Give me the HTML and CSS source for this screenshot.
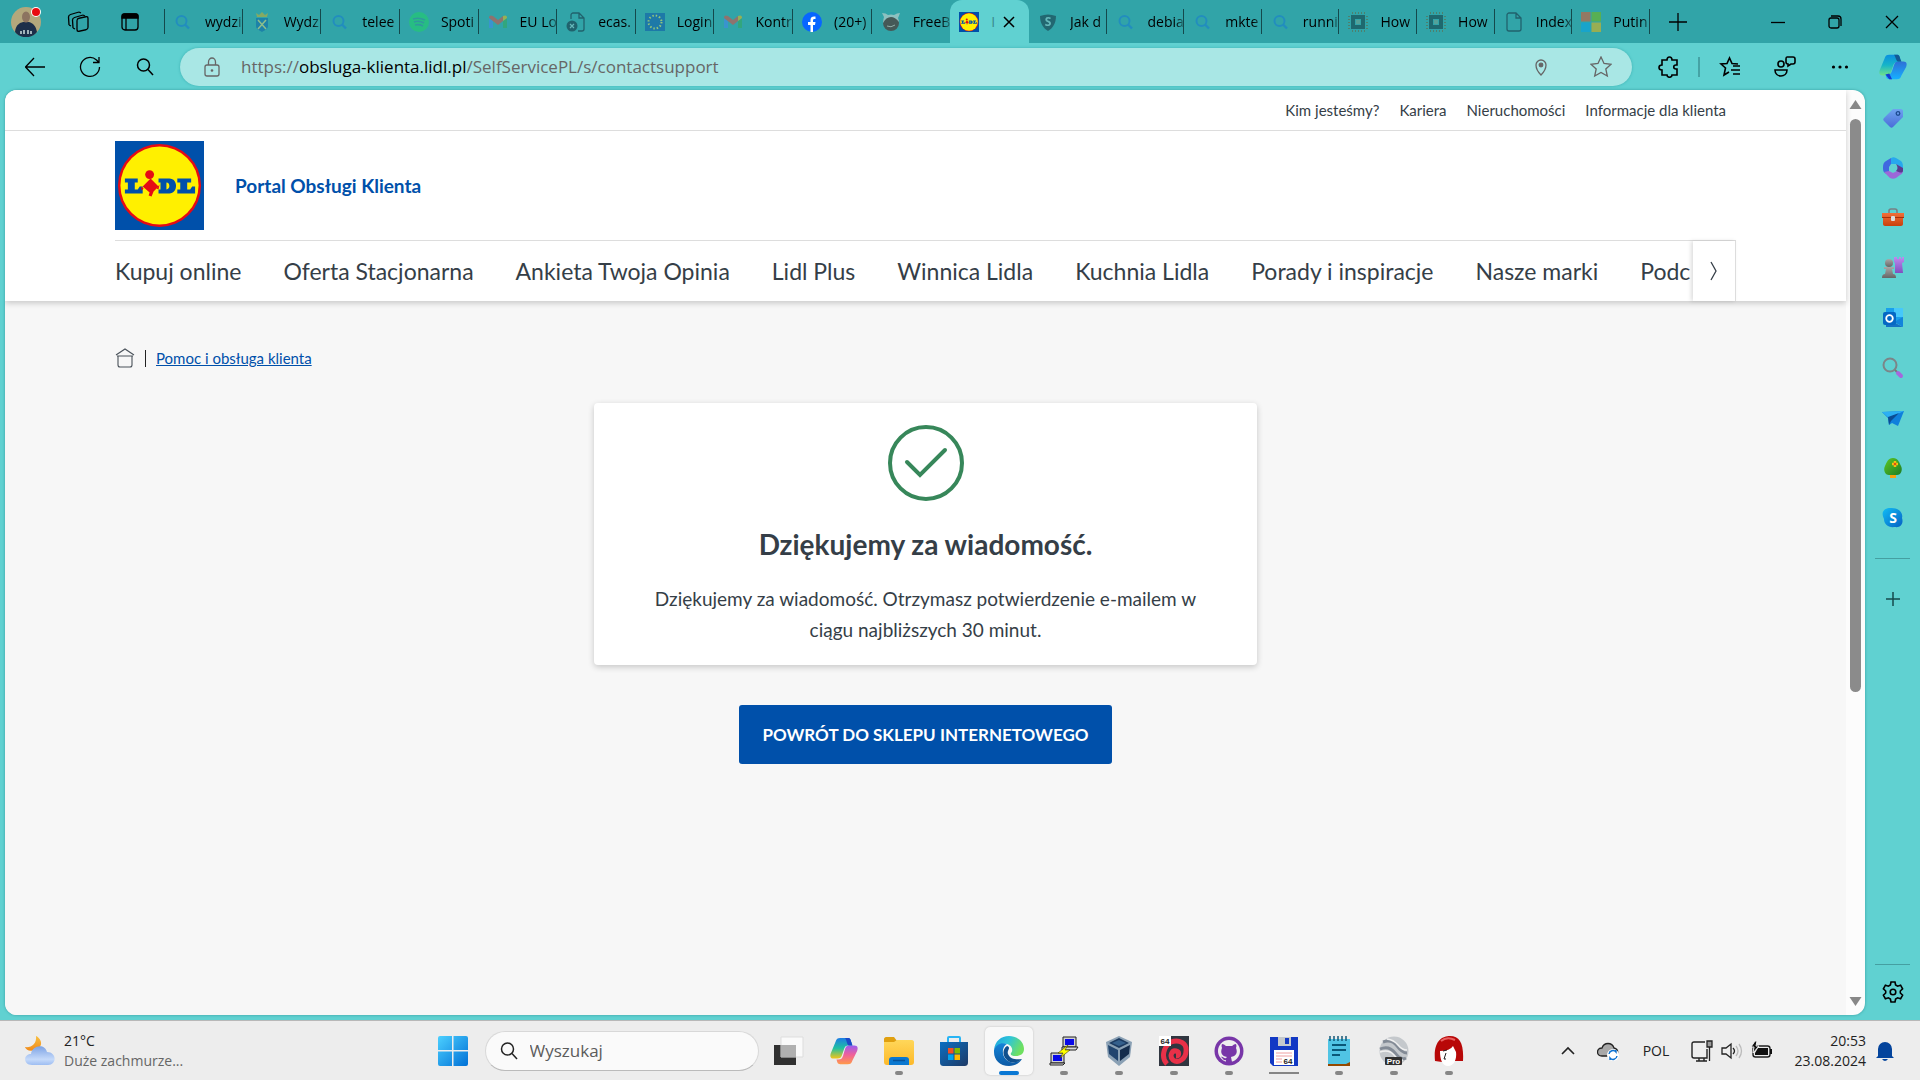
FILE: index.html
```
<!DOCTYPE html>
<html lang="pl">
<head>
<meta charset="utf-8">
<title>Portal Obsługi Klienta</title>
<link rel="stylesheet" href="styles.css">
</head>
<body>
<svg class="defs" aria-hidden="true">
  <defs>
    <linearGradient id="gCop1" x1="0" y1="0" x2="0" y2="1"><stop offset="0" stop-color="#0a8fe0"/><stop offset=".5" stop-color="#16b5c8"/><stop offset="1" stop-color="#6fe08a"/></linearGradient>
    <linearGradient id="gCop2" x1="0" y1="0" x2="0" y2="1"><stop offset="0" stop-color="#2e6fd6"/><stop offset="1" stop-color="#16b0ff"/></linearGradient>
    <linearGradient id="gPil1" x1="0" y1="0" x2="0" y2="1"><stop offset="0" stop-color="#1c7be6"/><stop offset=".5" stop-color="#1fc0a0"/><stop offset="1" stop-color="#f5c518"/></linearGradient>
    <linearGradient id="gPil2" x1="0" y1="0" x2="0" y2="1"><stop offset="0" stop-color="#9a5cf0"/><stop offset=".5" stop-color="#f0609a"/><stop offset="1" stop-color="#ff9a4a"/></linearGradient>
    <linearGradient id="gWin" x1="0" y1="0" x2="1" y2="1"><stop offset="0" stop-color="#4cd0ff"/><stop offset="1" stop-color="#0070d6"/></linearGradient>
    <linearGradient id="gFold" x1="0" y1="0" x2="0" y2="1"><stop offset="0" stop-color="#ffd75a"/><stop offset="1" stop-color="#fdb92a"/></linearGradient>
    <linearGradient id="gStore" x1="0" y1="0" x2="1" y2="1"><stop offset="0" stop-color="#0a6fc2"/><stop offset="1" stop-color="#1f3a66"/></linearGradient>
    <linearGradient id="gEdge" x1="0" y1="0" x2="1" y2=".4"><stop offset="0" stop-color="#1ba0e0"/><stop offset=".5" stop-color="#2fc5d8"/><stop offset="1" stop-color="#6fe060"/></linearGradient>
    <linearGradient id="gEdge2" x1="0" y1="0" x2="0" y2="1"><stop offset="0" stop-color="#1484d8"/><stop offset="1" stop-color="#0c59a4"/></linearGradient>
    <linearGradient id="gTag" x1="0" y1="0" x2="0" y2="1"><stop offset="0" stop-color="#6ea4f0"/><stop offset="1" stop-color="#4a6cd8"/></linearGradient>
    <linearGradient id="gBox" x1="0" y1="0" x2="0" y2="1"><stop offset="0" stop-color="#f0703a"/><stop offset="1" stop-color="#c8400c"/></linearGradient>
    <linearGradient id="gPawn" x1="0" y1="0" x2="0" y2="1"><stop offset="0" stop-color="#a8a8a8"/><stop offset="1" stop-color="#666"/></linearGradient>
    <linearGradient id="gRook" x1="0" y1="0" x2="0" y2="1"><stop offset="0" stop-color="#c08af0"/><stop offset="1" stop-color="#8050c0"/></linearGradient>
    <linearGradient id="gSky" x1="0" y1="0" x2="1" y2="1"><stop offset="0" stop-color="#10bdf5"/><stop offset="1" stop-color="#0660c4"/></linearGradient>
    <linearGradient id="gCloud" x1="0" y1="0" x2="0" y2="1"><stop offset="0" stop-color="#7ca2e4"/><stop offset=".7" stop-color="#c5dafa"/><stop offset="1" stop-color="#9dbdf2"/></linearGradient>
    <linearGradient id="gMoon" x1="0" y1="0" x2="0" y2="1"><stop offset="0" stop-color="#f8c040"/><stop offset="1" stop-color="#f08a1c"/></linearGradient>
    <linearGradient id="gTree" x1="0" y1="0" x2="1" y2="1"><stop offset="0" stop-color="#5cc824"/><stop offset="1" stop-color="#1e7c24"/></linearGradient>
    <symbol id="search" viewBox="0 0 20 20"><circle cx="8.500" cy="8" r="6" fill="none" stroke="currentColor" stroke-width="1.500"/><path d="M13 12.500 18 18" fill="none" stroke="currentColor" stroke-width="1.500"/></symbol>
    <symbol id="bing" viewBox="0 0 20 20"><circle cx="8.500" cy="9" r="5" fill="none" stroke="#1478d4" stroke-width="2"/><path d="m12 12.500 4 4" stroke="#1478d4" stroke-width="2.400"/></symbol>
    <symbol id="gmail" viewBox="0 0 20 20"><path d="M1 6v10h4V9z" fill="#4285f4"/><path d="M19 6v10h-4V9z" fill="#34a853"/><path d="M1 6c0-3 2-3 4-2l5 4 5-4v5l-5 4-9-7z" fill="#ea4335"/><path d="M15 4c2-1 4-1 4 2l-4 3z" fill="#fbbc04"/></symbol>
    <symbol id="chip" viewBox="0 0 20 20"><path d="M4 1h13M4 19h13" stroke="#6b5e34" stroke-width="2" stroke-dasharray="1 2"/><path d="M1 4v13M19 4v13" stroke="#6b5e34" stroke-width="2" stroke-dasharray="1 2"/><path d="M3 3h14v14H3zM7 7v6h6V7z" fill="#0c3038" fill-rule="evenodd"/><path d="M8 8h4v4H8z" fill="#7aa08a"/></symbol>
    <symbol id="lidl" viewBox="0 0 90 90"><path d="M0 0h90v90H0z" fill="#0050aa"/><circle cx="45" cy="45" r="42" fill="#e60a14"/><circle cx="45" cy="45" r="39.500" fill="#fff000"/><path d="M10 38h13v4h-3v7h3l2-3h3v7H10v-4h3v-7h-3zM44 38h11c9 0 9 15 0 15H44v-4h2v-7h-2zM52 42v7c4 0 4-7 0-7zM63 38h14v4h-4v7h3l2-3h3v7H63v-4h3v-7h-3z" fill="#0050aa"/><path d="m36 38 8 8-5 5-2 5-3-1 1-3-7-6z" fill="#e60a14"/><path d="m26 46 3 2-2 2zM45 44l-3 4 2 1z" fill="#e60a14"/><circle cx="35" cy="34" r="4.500" fill="#e60a14"/></symbol>
    <symbol id="copilot" viewBox="0 0 32 32"><path d="M12 3h8c3 0 3 2 4 5l1 3h-4c-3 0-4 1-5 4l-2 6c-1 3-2 4-5 4H5c-4 0-4-3-3-6L7 7c1-3 2-4 5-4z" fill="url(#gCop1)"/><path d="M20 29h-8c-3 0-3-2-4-5h2c3 0 4-1 5-4l2-6c1-3 2-4 5-4h5c4 0 4 3 3 6l-5 9c-1 3-2 4-5 4z" fill="url(#gCop2)"/><path d="M17 3h3c3 0 3 2 4 5l1 2h-4c-2-1-2-5-4-7z" fill="#135a94"/><path d="m8 24 4 5h3l-3-6z" fill="#153bd0"/></symbol>
    <symbol id="pilot" viewBox="0 0 32 32"><path d="M12 2h8c3 0 3 2 4 5l1 3h-4c-3 0-4 1-5 4l-2 6c-1 3-2 4-5 4H5c-4 0-4-3-3-6L7 6c1-3 2-4 5-4z" fill="url(#gPil1)"/><path d="M20 30h-8c-3 0-3-2-4-5h2c3 0 4-1 5-4l2-7c1-3 2-4 5-4h5c4 0 4 3 3 6l-5 10c-1 3-2 4-5 4z" fill="url(#gPil2)"/><path d="M17 2h3c3 0 3 2 4 5l1 3h-4c-2-1-2-6-4-8z" fill="#1b49c8"/></symbol>
  </defs>
</svg>

<header class="browser">
  <div class="tabstrip">
    <button class="cell cell-tool" aria-label="Profil"><svg class="i30" viewBox="0 0 30 30"><circle cx="15" cy="15" r="15" fill="#b3a87c"/><path d="M4 25c1-8 5-9 8-10h6c4 1 7 4 8 10-5 7-17 7-22 0z" fill="#1c2f4a"/><ellipse cx="15" cy="10" rx="4" ry="5.500" fill="#8c7460"/><path d="M10 24v3M13 23v4M17 23v4M20 24v3" stroke="#cdd" stroke-width="1.500"/><circle cx="25" cy="5" r="5" fill="#fff"/><circle cx="25" cy="5" r="4" fill="#e80c10"/></svg></button>
    <button class="cell cell-tool" aria-label="Obszary robocze"><svg class="i24 line" viewBox="0 0 24 24"><rect x="11" y="7" width="11" height="13" rx="2" transform="skewY(-12) translate(0 4)"/><path d="M7 18l-.5-8c0-1 .5-2 2-2.500L17 5M3 15l-.5-8c0-1 .5-2 2-2.500L13 2M7 18l2 1M3 15l2 1M13 2l2 1M17 5l2 1"/></svg></button>
    <button class="cell cell-tool" aria-label="Karty"><svg class="i24 line" viewBox="0 0 24 24"><rect x="4" y="4" width="16" height="16" rx="3"/><path d="M8 8v12"/><path d="M4 8V6c0-1 1-2 2-2h12c1 0 2 1 2 2v2z" fill="#000"/></svg></button>
    <nav class="tabs" aria-label="Karty przeglądarki">
      <a class="tab first" href="#"><svg class="fav"><use href="#bing"/></svg><span>wydzi</span></a>
      <a class="tab" href="#"><svg class="fav" viewBox="0 0 20 20"><path d="m5 5-1-4 3 2 3-3 3 3 3-2-1 4z" fill="#d8b020"/><path d="M4 6h12v8c0 3-3 4-6 6-3-2-6-3-6-6z" fill="#0a62a8"/><path d="m6 8 8 9M14 8l-8 9" stroke="#e8d870" stroke-width="1.500"/></svg><span>Wydz</span></a>
      <a class="tab" href="#"><svg class="fav"><use href="#bing"/></svg><span>telee</span></a>
      <a class="tab" href="#"><svg class="fav" viewBox="0 0 20 20"><circle cx="10" cy="10" r="10" fill="#1ed760"/><path d="M4 7q6-2 12 1M5 10q5-2 10 1M6 13q4-1 8 1" fill="none" stroke="#2f8f94" stroke-width="1.600"/></svg><span>Spoti</span></a>
      <a class="tab" href="#"><svg class="fav"><use href="#gmail"/></svg><span>EU Lo</span></a>
      <a class="tab" href="#"><svg class="fav" viewBox="0 0 20 20"><path d="M5 7V3c0-1 1-2 2-2h6l5 5v11c0 1-1 2-2 2h-4M13 1v5h5" fill="none" stroke="#123" stroke-width="1.300"/><circle cx="6" cy="14" r="5.500" fill="#123"/><path d="m4 12 4 4m0-4-4 4" stroke="#9cc" stroke-width="1.200"/></svg><span>ecas.</span></a>
      <a class="tab" href="#"><svg class="fav" viewBox="0 0 20 20"><path d="M0 1h20v18H0z" fill="#0a50a8"/><circle cx="10" cy="10" r="6.500" fill="none" stroke="#f5e850" stroke-width="2" stroke-dasharray="1.400 2"/></svg><span>Login</span></a>
      <a class="tab" href="#"><svg class="fav"><use href="#gmail"/></svg><span>Kontr</span></a>
      <a class="tab" href="#"><svg class="fav awake" viewBox="0 0 20 20"><circle cx="10" cy="10" r="10" fill="#0866ff"/><path d="M8.500 20v-7H6v-3h2.500V8c0-3 2-4 5-3.500v2.500c-2 0-2.500 0-2.500 1.500V10h2.500l-.5 3h-2v7z" fill="#fff"/></svg><span>(20+)</span></a>
      <a class="tab" href="#"><svg class="fav" viewBox="0 0 20 20"><circle cx="10" cy="11" r="8" fill="#5a1008"/><path d="M1 1q4 0 6 2 3-1 6 0 3-2 6-2-1 3-2 5 1 2 1 4-4-5-8-5-5 0-8 6 0-3 1-6-1-2-2-4z" fill="#e8ded8"/><path d="M6 14q4 2 8-1" stroke="#eba" fill="none"/></svg><span>FreeB</span></a>
      <a class="tab active" href="#" aria-current="page"><svg class="fav awake"><use href="#lidl"/></svg><span>I</span><svg class="close" viewBox="0 0 12 12"><path d="m1 1 10 10m0-10L1 11" stroke="#000" stroke-width="1.500"/></svg></a>
      <a class="tab" href="#"><svg class="fav" viewBox="0 0 20 20"><path d="M2 4q8-3 16 0c0 7-3 12-8 15C5 16 2 11 2 4z" fill="#152c3c"/><text x="10" y="14" class="ico-s">S</text></svg><span>Jak d</span></a>
      <a class="tab" href="#"><svg class="fav"><use href="#bing"/></svg><span>debia</span></a>
      <a class="tab" href="#"><svg class="fav"><use href="#bing"/></svg><span>mkte</span></a>
      <a class="tab" href="#"><svg class="fav"><use href="#bing"/></svg><span>runni</span></a>
      <a class="tab" href="#"><svg class="fav"><use href="#chip"/></svg><span>How</span></a>
      <a class="tab" href="#"><svg class="fav"><use href="#chip"/></svg><span>How</span></a>
      <a class="tab" href="#"><svg class="fav" viewBox="0 0 20 20"><path d="M3 3c0-1 1-2 2-2h7l5 5v11c0 1-1 2-2 2H5c-1 0-2-1-2-2zM12 1v5h5" fill="none" stroke="#123" stroke-width="1.300"/></svg><span>Index</span></a>
      <a class="tab" href="#"><svg class="fav" viewBox="0 0 20 20"><path d="M0 0h9.500v9.500H0z" fill="#f25022"/><path d="M10.500 0H20v9.500h-9.500z" fill="#7fba00"/><path d="M0 10.500h9.500V20H0z" fill="#00a4ef"/><path d="M10.500 10.500H20V20h-9.500z" fill="#ffb900"/></svg><span>Putin</span></a>
    </nav>
    <button class="cell" aria-label="Nowa karta"><svg class="i18 line" viewBox="0 0 18 18"><path d="M9 0v18M0 9h18"/></svg></button>
    <div class="window-controls">
      <button aria-label="Minimalizuj"><svg class="i14 line" viewBox="0 0 14 14"><path d="M0 7.500h14"/></svg></button>
      <button aria-label="Przywróć"><svg class="i14 line" viewBox="0 0 14 14"><rect x="1" y="3" width="10" height="10" rx="2"/><path d="M3 1h7c2 0 3 1 3 3v7"/></svg></button>
      <button aria-label="Zamknij"><svg class="i14 line" viewBox="0 0 14 14"><path d="m1 1 12 12m0-12L1 13"/></svg></button>
    </div>
  </div>
  <div class="toolbar">
    <button class="cell" aria-label="Wstecz"><svg class="i20 line" viewBox="0 0 20 20"><path d="M20 10H1m8-9-8.500 9L9 19"/></svg></button>
    <button class="cell" aria-label="Odśwież"><svg class="i22 line" viewBox="0 0 22 22"><path d="M20.500 11a9.500 9.500 0 1 1-3-7l2 2M20 1v5.500h-6"/></svg></button>
    <button class="cell" aria-label="Szukaj"><svg class="i20"><use href="#search"/></svg></button>
    <div class="address">
      <svg class="i20 soft" viewBox="0 0 20 20"><rect x="3" y="8" width="14" height="11" rx="2"/><path d="M6.500 8V5a3.500 4 0 0 1 7 0v3"/><circle cx="10" cy="13.500" r=".7"/></svg>
      <div class="url" role="textbox" contenteditable="true" spellcheck="false" aria-label="Pasek adresu">https://<b>obsluga-klienta.lidl.pl</b>/SelfServicePL/s/contactsupport</div>
      <button aria-label="Lokalizacja"><svg class="i18 soft" viewBox="0 0 18 18"><path d="M9 17C5 13 4 10 4 7a5 5 0 0 1 10 0c0 3-1 6-5 10z"/><circle cx="9" cy="7" r="1.800" fill="#666"/></svg></button>
      <button aria-label="Ulubione"><svg class="i22 soft" viewBox="0 0 22 22"><path d="m11 1 3 6.500 7 .8-5.200 4.700 1.500 7L11 16.500 4.700 20l1.500-7L1 8.300l7-.8z"/></svg></button>
    </div>
    <button class="cell" aria-label="Rozszerzenia"><svg class="i22 line bold" viewBox="0 0 22 22"><path d="M7 4h2c0-4 5-4 5 0h5v5h-1c-3 0-3 4 0 4h1v6h-5c0 3-5 3-5 0H4v-5C0 14 0 9 4 9V4z"/></svg></button>
    <span class="bar"></span>
    <button class="cell" aria-label="Lista ulubionych"><svg class="i22 line bold" viewBox="0 0 22 22"><path d="m19 8-6-.5L10.500 2 8 7.500 2 8l4.500 4L5 19l5-3M14 10h7M12 14h9M14 18h7"/></svg></button>
    <button class="cell" aria-label="Opinie"><svg class="i24 line bold" viewBox="0 0 24 24"><circle cx="8" cy="9" r="3"/><path d="M2 15h12c0 8-12 8-12 0zM14 2h6c1 0 2 1 2 2v3c0 1-1 2-2 2h-2l-3 2V9c-1 0-2-1-2-2V4c0-1 0-2 1-2z"/></svg></button>
    <button class="cell" aria-label="Więcej"><svg class="i18" viewBox="0 0 18 18"><circle cx="2.500" cy="9" r="1.600"/><circle cx="9" cy="9" r="1.600"/><circle cx="15.500" cy="9" r="1.600"/></svg></button>
    <button class="cell cell-tool" aria-label="Copilot"><svg class="i30"><use href="#copilot"/></svg></button>
  </div>
</header>

<div class="workspace">
  <div class="viewport">
    <div class="page">
      <header class="site-header">
        <nav class="meta"><a href="#">Kim jesteśmy?</a><a href="#">Kariera</a><a href="#">Nieruchomości</a><a href="#">Informacje dla klienta</a></nav>
        <div class="brand"><a href="#" aria-label="Lidl"><svg class="logo"><use href="#lidl"/></svg></a><a class="portal" href="#">Portal Obsługi Klienta</a></div>
        <div class="menu">
          <nav class="menu-links"><a href="#">Kupuj online</a><a href="#">Oferta Stacjonarna</a><a href="#">Ankieta Twoja Opinia</a><a href="#">Lidl Plus</a><a href="#">Winnica Lidla</a><a href="#">Kuchnia Lidla</a><a href="#">Porady i inspiracje</a><a href="#">Nasze marki</a><a href="#">Podc</a></nav>
          <button class="menu-next" aria-label="Dalej"><svg class="i20" viewBox="0 0 20 20"><path d="m7 1 5 9-5 9" fill="none" stroke="#353e47" stroke-width="1.300"/></svg></button>
        </div>
      </header>
      <main class="content">
        <nav class="crumbs"><a href="#" aria-label="Strona główna"><svg class="i20" viewBox="0 0 20 20"><path d="m1 7 9-6 9 6M3 8v9c0 1 1 2 2 2h10c1 0 2-1 2-2V8zM2 8h16" fill="none" stroke="#4a525a" stroke-width="1.100"/></svg></a><span class="crumb-bar"></span><a class="crumb" href="#">Pomoc i obsługa klienta</a></nav>
        <section class="card">
          <svg class="check" viewBox="0 0 76 76"><circle cx="38" cy="38" r="36"/><path d="m19 37 13 13 25-25" stroke-linecap="round"/></svg>
          <h1>Dziękujemy za wiadomość.</h1>
          <p>Dziękujemy za wiadomość. Otrzymasz potwierdzenie e-mailem w ciągu najbliższych 30 minut.</p>
        </section>
        <button class="cta">POWRÓT DO SKLEPU INTERNETOWEGO</button>
      </main>
    </div>
    <div class="scrollbar"><svg class="arrow" viewBox="0 0 12 10"><path d="M6 0 12 9H0z"/></svg><div class="track"><div class="thumb"></div></div><svg class="arrow" viewBox="0 0 12 10"><path d="M6 10 12 1H0z"/></svg></div>
  </div>
  <aside class="sidebar">
    <button aria-label="Zakupy"><svg class="i22" viewBox="0 0 22 22"><path d="M11 2h8c1 0 2 1 2 2v6L11 20c-1 1-2 1-3 0l-6-6c-1-1-1-2 0-3z" fill="url(#gTag)"/><circle cx="16" cy="6.500" r="1.800" fill="none" stroke="#1c4a90" stroke-width="1.300"/></svg></button>
    <button aria-label="Microsoft 365"><svg class="i22" viewBox="0 0 22 22"><path d="M9 1v6l-2 3v8L3 16c-2-1-2-3-2-6s1-5 3-6z" fill="#3f68e0"/><path d="M9 1c2-1 3-1 5 0l5 3c2 2 2 4 2 8l-7-5H9z" fill="#27a8ee"/><path d="M2 15l5-1 4 2 8-4 2 1c0 3-1 4-3 5l-4 3c-2 1-4 1-6 0z" fill="#9c68d8"/><path d="M14 7l7 4v3c-1 3-4 1-7 0 2-2 2-4 0-7z" fill="#5a3a90"/></svg></button>
    <button aria-label="Narzędzia"><svg class="i22" viewBox="0 0 22 22"><path d="M7 7V4c0-1 1-2 2-2h4c1 0 2 1 2 2v3" fill="none" stroke="#778084" stroke-width="1.600"/><path d="M0 6h22v5h-1v6c0 1-1 2-2 2H3c-1 0-2-1-2-2v-6H0z" fill="url(#gBox)"/><path d="M0 10h22v1H0z" fill="#a83008"/><rect x="9" y="9" width="4" height="5" rx="1" fill="#ddd"/></svg></button>
    <button aria-label="Gry"><svg class="i22" viewBox="0 0 22 22"><path d="M12 0h3v2h2V0h2v2h1V0h2v5l-2 1 1 10h-8V6l-1-1z" fill="url(#gRook)"/><circle cx="7" cy="6" r="4" fill="url(#gPawn)"/><path d="M2 10h10v2h-2l1 5c2 0 3 1 3 4H0c0-3 1-4 3-4l1-5H2z" fill="url(#gPawn)"/></svg></button>
    <button aria-label="Outlook"><svg class="i22" viewBox="0 0 22 22"><path d="M4 1h17v13H4z" fill="#18a0ec"/><path d="M12 1h9v9h-9z" fill="#46c8fa"/><path d="M4 11 21 20H4z" fill="#1370c4"/><path d="m21 10-9 5 9 5z" fill="#1284dc"/><rect x="1" y="5" width="13" height="13" rx="2" fill="#0568c4"/><circle cx="7.500" cy="11.500" r="3.300" fill="none" stroke="#fff" stroke-width="1.800"/></svg></button>
    <button aria-label="Wyszukaj"><svg class="i22" viewBox="0 0 22 22"><circle cx="8" cy="8" r="6.500" fill="none" stroke="#7c8588" stroke-width="2"/><path d="m13 13 3 3" stroke="#777" stroke-width="2"/><path d="m16 16 3 3" stroke="#a468dc" stroke-width="4" stroke-linecap="round"/></svg></button>
    <button aria-label="Drop"><svg class="i22" viewBox="0 0 22 22"><path d="m0 5 22-1-6 15-6-3-3 2-1-7z" fill="#0f80dc"/><path d="m0 5 22-1L7 11z" fill="#2cb0f4"/><path d="m6 10 11-4-8 8-2 4z" fill="#0b4d94"/></svg></button>
    <button aria-label="Drzewo"><svg class="i22" viewBox="0 0 22 22"><path d="M8 16h6v5H8z" fill="#f5a210"/><path d="M11 1c5 0 6 4 8 8s0 9-4 9H7c-4 0-6-5-4-9s3-8 8-8z" fill="url(#gTree)"/><path d="M13 4v6M10 7h6" stroke="#f8c010" stroke-width="2.500"/><circle cx="13" cy="7" r="1.300" fill="#e05010"/></svg></button>
    <button aria-label="Skype"><svg class="i22" viewBox="0 0 22 22"><path d="M7 1c4 0 6 0 8 1 4 2 6 5 5 9 2 6-2 10-7 9C6 21 2 17 2 12-1 6 1 2 7 1z" fill="url(#gSky)"/><text x="11" y="16" class="ico-s ico-l">S</text></svg></button>
    <span class="rule"></span>
    <button class="add" aria-label="Dodaj"><svg class="i14" viewBox="0 0 14 14"><path d="M7 0v14M0 7h14" stroke="#164a4c" stroke-width="1.500"/></svg></button>
    <span class="rule bottom"></span>
    <button aria-label="Ustawienia"><svg class="i22 line bold" viewBox="0 0 22 22"><path d="M9 1h4l.6 3 2 1.200 3-1 2 3.600L18.300 10v2l2.300 2.200-2 3.600-3-1-2 1.200-.6 3H9l-.6-3-2-1.200-3 1-2-3.600L3.700 12v-2L1.400 7.800l2-3.600 3 1 2-1.200z"/><circle cx="11" cy="11" r="2.800"/></svg></button>
  </aside>
</div>

<footer class="taskbar">
  <button class="weather"><svg class="i30" viewBox="0 0 30 30"><path d="M11 0c6 3 8 11-1 14-5 2-9 0-10-3 6 1 12-3 11-11z" fill="url(#gMoon)"/><path d="M7 29c-9 0-9-11-1-11 1-9 14-11 16-2 10 0 10 13 1 13z" fill="url(#gCloud)"/></svg><span class="two"><span>21°C</span><span class="muted">Duże zachmurze...</span></span></button>
  <div class="tasks">
    <button class="start" aria-label="Start"><svg class="i30" viewBox="0 0 30 30"><path d="M0 2q0-2 2-2h12v14H0zM15.500 0H28q2 0 2 2v12H15.500zM0 15.500h14V30H2q-2 0-2-2zM15.500 15.500H30V28q0 2-2 2H15.500z" fill="url(#gWin)"/></svg></button>
    <label class="search"><svg class="i20"><use href="#search"/></svg><input type="search" placeholder="Wyszukaj" aria-label="Wyszukaj"></label>
    <div class="apps">
      <button aria-label="Widok zadań"><svg class="i30" viewBox="0 0 30 30"><path d="M0 9h22v20H0z" fill="#303030"/><path d="M7 1h22v20H7z" fill="#fafafa" stroke="#ddd"/><path d="M7 9h15v12H7z" fill="#b0b0b0"/></svg></button>
      <button aria-label="Copilot"><svg class="i30"><use href="#pilot"/></svg></button>
      <button class="run" aria-label="Eksplorator plików"><svg class="i30" viewBox="0 0 30 30"><path d="M0 3c0-1 1-2 2-2h8l3 4h13v5H0z" fill="#e0a010"/><path d="M0 6h10l3-2h15c1 0 2 1 2 2v20c0 2-1 3-3 3H3c-2 0-3-1-3-3z" fill="url(#gFold)"/><path d="M5 29v-5c0-2 1-3 3-3h14c2 0 3 1 3 3v5z" fill="#0b78d0"/><path d="M9 24.500h12" stroke="#07529a" stroke-width="1.500"/></svg></button>
      <button aria-label="Microsoft Store"><svg class="i30" viewBox="0 0 30 30"><path d="M9 7V2q0-1 1-1h10q1 0 1 1v5" fill="none" stroke="#28b4f4" stroke-width="2"/><path d="M1 6h28v20c0 3-1 4-4 4H5c-3 0-4-1-4-4z" fill="url(#gStore)"/><path d="M9 12h5.500v5.500H9z" fill="#f25022"/><path d="M15.500 12H21v5.500h-5.500z" fill="#7fba00"/><path d="M9 18.500h5.500V24H9z" fill="#00a4ef"/><path d="M15.500 18.500H21V24h-5.500z" fill="#ffb900"/></svg></button>
      <button class="run current" aria-label="Microsoft Edge"><svg class="i30" viewBox="0 0 30 30"><path d="M0 14C1 5 7 0 15 0c9 0 15 6 15 13 0 5-4 7-8 7-4 0-6-1-5-3 2-2 2-7-4-9C7 7 2 10 0 14z" fill="url(#gEdge)"/><path d="M0 14C2 8 8 6 13 8c-5 2-7 14 3 18 4 1 8 0 12-3-3 5-8 7-13 7C6 30 0 24 0 16z" fill="url(#gEdge2)"/><path d="M13 10c-6 4-4 13 3 16 4 1 9 0 12-3-6 1-12 0-14-5-1-3 1-4 1-6 0-1-1-2-2-2z" fill="#10508e"/></svg></button>
      <button class="run" aria-label="PuTTY"><svg class="i30" viewBox="0 0 30 30"><path d="M14 1h13v10H14zM2 17h13v10H2z" fill="#d0d0d0" stroke="#222"/><path d="M16 3h9v6h-9zM4 19h9v6H4z" fill="#0808e8"/><path d="M13 11h16l-2 3H13zM1 27h15l-2 2H1z" fill="#d8d8d8" stroke="#222"/><path d="m19 9-10 8h5l-3 5 10-8h-5z" fill="#ff0" stroke="#443c00" stroke-width=".6"/></svg></button>
      <button class="run" aria-label="VirtualBox"><svg class="i30" viewBox="0 0 30 30"><path d="M15 0 28 6 26 21 15 30 4 21 2 6z" fill="#8aa0b4"/><path d="m15 2 10 5-10 5L5 7z" fill="#1c3a60"/><path d="m4 9 10 5v11l-9-7z" fill="#21446e"/><path d="m26 9-10 5v11l9-7z" fill="#142c4c"/><path d="m8 7 7-3 7 3-7 3z" fill="#35608c"/></svg></button>
      <button class="run" aria-label="PSPad"><svg class="i30" viewBox="0 0 30 30"><path d="M0 0h30v30H0z" fill="#303640"/><path d="M8 28C2 22 4 11 12 6c8-3 16 1 15 9 0 8-8 13-13 9-4-4-1-10 3-9 4 1 3 5 0 5" fill="none" stroke="#e83048" stroke-width="5"/><path d="M0 0h12v10H0z" fill="#fff"/><text x="6" y="8" class="ico-64">64</text></svg></button>
      <button class="run" aria-label="GitHub"><svg class="i30" viewBox="0 0 30 30"><circle cx="15" cy="15" r="14.500" fill="#7836a8"/><circle cx="15" cy="15" r="11" fill="#eee"/><path d="M8 8q2 0 4 2h6q2-2 4-2 1 2 0 4c2 5 0 8-5 9l1 5h-6v-2c-3 1-3-2-5-3 2-1 3 2 5 1l1-1c-5-1-7-4-5-9q-1-2 0-4z" fill="#7836a8"/></svg></button>
      <button class="run grouped" aria-label="Total Commander"><svg class="i30" viewBox="0 0 30 30"><path d="M1 1h28v29H4l-3-3z" fill="#1238c4"/><path d="M9 1h13v9H9z" fill="#c4c8cc"/><path d="M16 2h4v6h-4z" fill="#1238c4"/><path d="M5 14h20v15H5z" fill="#fff"/><path d="M7 17h16M7 20h16M7 23h6M7 26h6" stroke="#f0a0a0"/><text x="19" y="28" class="ico-64">64</text></svg></button>
      <button class="run" aria-label="Notatnik"><svg class="i30" viewBox="0 0 30 30"><path d="M4 3h22v26H4z" fill="#50c4e4"/><path d="M4 28h18l4-2v4H4z" fill="#944800"/><path d="M8 9h14M8 14h14M8 19h8" stroke="#0a5878" stroke-width="1.800"/><path d="M6 0v5M10 0v5M14 0v5M18 0v5M22 0v5" stroke="#135878" stroke-width="1.500"/></svg></button>
      <button class="run" aria-label="Google Earth Pro"><svg class="i30" viewBox="0 0 30 30"><circle cx="15" cy="15" r="14.500" fill="#c4c8cc"/><path d="M4 6q9-3 14 4t10 7M1 13q9-4 15 4t11 5" fill="none" stroke="#838b96" stroke-width="3"/><path d="M8 3q7 1 11 6t9 5M1 16q9-3 14 3t9 5" fill="none" stroke="#f0f0f0" stroke-width="1.500"/><rect x="6" y="21" width="17" height="8" rx="1" fill="#303030"/><text x="14.500" y="28" class="ico-64 ico-w">Pro</text></svg></button>
      <button class="run" aria-label="IrfanView"><svg class="i30" viewBox="0 0 30 30"><path d="M1 25C-1 5 8 0 16 0c10 0 14 8 13 25H20L8 26z" fill="#b80808"/><path d="M6 15q10 0 13-5l3 6c1 7-2 14-8 14S6 23 6 15z" fill="#fff"/><path d="m12 17-2 6h2M9 15l4-1" stroke="#222" fill="none"/><path d="M7 5q6-5 14-1" stroke="#e86060" stroke-width="2" fill="none"/></svg></button>
    </div>
  </div>
  <div class="tray">
    <button class="w40" aria-label="Ukryte ikony"><svg class="i14" viewBox="0 0 14 14"><path d="m1 10 6-6 6 6" fill="none" stroke="#222" stroke-width="1.600"/></svg></button>
    <button class="w40" aria-label="OneDrive"><svg class="i22" viewBox="0 0 22 22"><path d="M5 16c-6 0-6-8 0-8 2-6 10-6 12 0 5 1 5 8 0 8z" fill="#a8a8a8" stroke="#222" stroke-width="1.300"/><circle cx="16" cy="15" r="6" fill="#fff"/><path d="M12 14a4 4 0 0 1 7-2v-2M20 16a4 4 0 0 1-7 2v2" fill="none" stroke="#0b70d0" stroke-width="1.400"/></svg></button>
    <button class="lang">POL</button>
    <button class="status" aria-label="Sieć, dźwięk, bateria">
      <svg class="i22" viewBox="0 0 22 22"><path d="M14 2H3Q1 2 1 4v12q0 2 2 2h13V9M8 18v3M13 18v3M5 21h11" fill="none" stroke="#222" stroke-width="1.400"/><path d="M16 1h5v6h-5zM18.500 7v14" fill="#999" stroke="#222" stroke-width="1.300"/></svg>
      <svg class="i22" viewBox="0 0 22 22"><path d="M1 8h4l5-4v14l-5-4H1z" fill="none" stroke="#222" stroke-width="1.300"/><path d="M12 8q3 3 0 6" fill="none" stroke="#222" stroke-width="1.300"/><path d="M15 6q4 5 0 10M18 4q5 7 0 14" fill="none" stroke="#bbb" stroke-width="1.300"/></svg>
      <svg class="i22" viewBox="0 0 22 22"><rect x="2" y="6" width="17" height="11" rx="2.500" fill="none" stroke="#222" stroke-width="1.400"/><path d="M7 8h10v7H4v-2zM19 9h2v5h-2z" fill="#111"/><path d="m4 1-4 6h3l-1 6 6-7H5l1-5z" fill="#111" stroke="#ededed"/></svg>
    </button>
    <button class="two clock"><span>20:53</span><span>23.08.2024</span></button>
    <button class="bell" aria-label="Powiadomienia"><svg class="i20" viewBox="0 0 20 20"><path d="M3 15V8a7 7 0 0 1 14 0v7l2 2H1zM7 18h6q-3 4-6 0z" fill="#04449c"/></svg></button>
  </div>
</footer>
</body>
</html>
```
FILE: styles.css
```
* { box-sizing: border-box; }
body {
  margin: 0;
  height: 100vh;
  display: flex;
  flex-direction: column;
  overflow: hidden;
  background: #60d1d1;
  color: #000;
  font-family: "Open Sans", "Noto Sans", sans-serif;
  font-size: 14px;
}
a { color: inherit; text-decoration: none; }
button {
  display: flex;
  align-items: center;
  justify-content: center;
  margin: 0;
  padding: 0;
  border: 0;
  background: none;
  color: inherit;
  font: inherit;
}
svg { display: block; flex: none; }
.defs { position: absolute; width: 0; height: 0; }
.i14 { width: 14px; height: 14px; }
.i18 { width: 18px; height: 18px; }
.i20 { width: 20px; height: 20px; }
.i22 { width: 22px; height: 22px; }
.i24 { width: 24px; height: 24px; }
.i30 { width: 30px; height: 30px; }
.line { fill: none; stroke: #000; stroke-width: 1.3; }
.bold { stroke-width: 1.6; }
.soft { fill: none; stroke: #666; stroke-width: 1.3; }
.ico-s { font: bold 12px "Open Sans", sans-serif; fill: #9cc; text-anchor: middle; }
.ico-l { font-size: 14px; fill: #fff; }
.ico-64 { font: bold 8px "Liberation Sans", sans-serif; fill: #222; text-anchor: middle; }
.ico-w { fill: #fff; }

/* Browser chrome */
.tabstrip { display: flex; height: 43px; background: #31a4a8; }
.cell { width: 55px; flex: none; }
.cell-tool { width: 52px; }
.tabs {
  flex: 1;
  display: grid;
  grid-template-columns: repeat(11, 79fr) repeat(8, 78fr);
  margin-left: 8px;
}
.tab {
  position: relative;
  display: flex;
  align-items: center;
  gap: 12px;
  min-width: 0;
  padding: 0 0 0 9px;
}
.tab::after,
.tab.first::before {
  content: "";
  position: absolute;
  right: 0;
  top: 9px;
  width: 1px;
  height: 25px;
  background: #14494c;
}
.tab.first::before { left: 0; right: auto; }
.tab span {
  flex: 1;
  min-width: 0;
  white-space: nowrap;
  line-height: 20px;
  mask-image: linear-gradient(90deg, #000 75%, #0004);
}
.fav { width: 20px; height: 20px; opacity: .5; }
.awake { opacity: 1; }
.tab.active { background: #60d1d1; border-radius: 12px 12px 0 0; padding-right: 14px; }
.tab.active::after,
.tab:nth-child(10)::after { display: none; }
.tab.active span { color: #3a8a8c; mask-image: none; }
.close { width: 12px; height: 12px; }
.window-controls { display: flex; margin-left: 44px; }
.window-controls button { width: 57px; }

.toolbar { display: flex; align-items: center; height: 47px; padding: 0 1px 0 7px; }
.toolbar .cell { height: 40px; }
.address {
  flex: 1;
  display: flex;
  align-items: center;
  height: 38px;
  margin: 0 9px 0 8px;
  padding: 0 20px 0 22px;
  border-radius: 19px;
  background: #a9e7e5;
  box-shadow: 0 0 3px #3bb0b2;
}
.address button { width: 22px; margin-left: 38px; }
.url { flex: 1; margin-left: 19px; color: #666; font-size: 17px; white-space: nowrap; outline: 0; }
.url b { color: #000; font-weight: 400; }
.bar { width: 2px; height: 20px; margin: 0 2px; background: #45a3a5; }

.workspace { flex: 1; display: flex; min-height: 0; padding-left: 5px; }
.viewport {
  flex: 1;
  display: flex;
  min-width: 0;
  margin-bottom: 5px;
  overflow: hidden;
  border-radius: 12px;
  background: #fcfcfc;
  box-shadow: 0 0 3px #389c9e;
}
.sidebar { width: 55px; flex: none; display: flex; flex-direction: column; align-items: center; padding: 3px 0; }
.sidebar button { width: 50px; height: 50px; }
.sidebar .rule { width: 35px; height: 1px; margin: 15px 0; background: #459fa1; }
.sidebar .bottom { margin: auto 0 2px; }

/* Site */
.page {
  flex: 1;
  min-width: 0;
  background: #f7f7f7;
  color: #353e47;
  font-family: "Lato", "Open Sans", sans-serif;
}
.site-header { background: #fff; box-shadow: 0 2px 6px #0003; }
.meta {
  display: flex;
  justify-content: flex-end;
  align-items: center;
  gap: 20px;
  height: 41px;
  padding: 0 120px;
  border-bottom: 1px solid #ddd;
  font-size: 15px;
}
.brand { display: flex; align-items: center; gap: 31px; height: 109px; margin: 0 110px; }
.logo { width: 89px; height: 89px; }
.portal { color: #0050aa; font-size: 19px; font-weight: 700; }
.menu { display: flex; height: 61px; margin: 0 110px; border-top: 1px solid #ddd; }
.menu-links { flex: 1; display: flex; align-items: center; gap: 42px; overflow: hidden; white-space: nowrap; font-size: 23px; }
.menu-next { width: 43px; flex: none; border-right: 1px solid #ddd; box-shadow: -2px 0 4px #0002; }
.content { display: flex; flex-direction: column; align-items: center; padding: 45px 110px; }
.crumbs { align-self: stretch; display: flex; align-items: center; gap: 10px; height: 24px; font-size: 15px; }
.crumb-bar { width: 1px; height: 17px; background: #222; }
.crumb { color: #0050aa; text-decoration: underline; }
.card {
  width: 100%;
  max-width: 663px;
  margin-top: 33px;
  padding: 22px 50px 20px;
  border-radius: 4px;
  background: #fff;
  box-shadow: 0 2px 6px #0003;
  text-align: center;
}
.check { width: 76px; height: 76px; margin: 0 auto; fill: none; stroke: #37875a; stroke-width: 4; }
.card h1 { margin: 22px 0 18px; font-size: 28px; line-height: 42px; }
.card p { margin: 0; font-size: 19px; line-height: 31px; }
.cta {
  height: 59px;
  margin-top: 40px;
  padding: 0 23px;
  border-radius: 3px;
  background: #0050aa;
  color: #fff;
  font-size: 17px;
  font-weight: 700;
}
.scrollbar { width: 19px; flex: none; display: flex; flex-direction: column; align-items: center; padding: 10px 0 9px; }
.arrow { width: 13px; height: 10px; fill: #888; }
.track { flex: 1; width: 11px; margin: 9px 0; }
.thumb { height: 66%; border-radius: 6px; background: #8b8b8b; }

/* Taskbar */
.taskbar {
  display: flex;
  align-items: center;
  height: 60px;
  flex: none;
  padding: 0 25px;
  border-top: 1px solid #b8b8b8;
  background: #ededed;
  color: #222;
}
.weather { flex: 1; justify-content: flex-start; gap: 9px; }
.two { display: flex; flex-direction: column; align-items: flex-start; line-height: 20px; }
.muted { color: #666; }
.tasks { display: flex; align-items: center; margin-right: 10px; }
.start { width: 30px; margin-right: 17px; }
.search {
  display: flex;
  align-items: center;
  gap: 11px;
  width: 274px;
  height: 40px;
  padding: 0 13px;
  border: 1px solid #d8d8d8;
  border-bottom-color: #bbb;
  border-radius: 20px;
  background: #fafafa;
}
.search input { width: 100%; min-width: 0; padding: 0; border: 0; outline: 0; background: none; font: inherit; font-size: 17px; }
.search input::placeholder { color: #5c5c5c; opacity: 1; }
.apps { display: flex; gap: 7px; margin-left: 6px; }
.apps button { position: relative; width: 48px; height: 48px; border-radius: 5px; }
.run::after {
  content: "";
  position: absolute;
  left: 20px;
  bottom: 0;
  width: 8px;
  height: 4px;
  border-radius: 2px;
  background: #868686;
}
.apps .current { background: #f8f8f8; box-shadow: 0 0 2px #bbb; }
.current::after { left: 14px; width: 20px; background: #0a78d4; }
.grouped::after { left: 9px; width: 30px; height: 2px; bottom: 1px; border-radius: 0; }
.tray { flex: 1; display: flex; align-items: center; justify-content: flex-end; }
.w40 { width: 40px; }
.lang { width: 56px; }
.status { width: 96px; gap: 8px; }
.clock { width: 86px; align-items: flex-end; }
.bell { width: 20px; margin-left: 9px; }
```
